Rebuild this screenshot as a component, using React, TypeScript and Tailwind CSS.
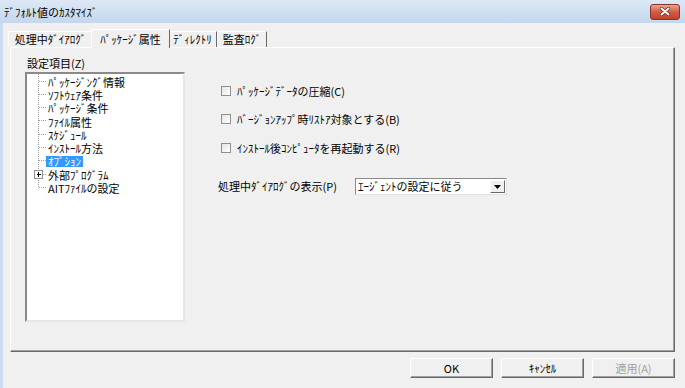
import React from "react";

const font = "font-['Noto_Sans_CJK_JP','Noto_Sans_CJK_SC',sans-serif]";

const treeItems = [
  "ﾊﾟｯｹｰｼﾞﾝｸﾞ情報",
  "ｿﾌﾄｳｪｱ条件",
  "ﾊﾟｯｹｰｼﾞ条件",
  "ﾌｧｲﾙ属性",
  "ｽｹｼﾞｭｰﾙ",
  "ｲﾝｽﾄｰﾙ方法",
  "ｵﾌﾟｼｮﾝ",
  "外部ﾌﾟﾛｸﾞﾗﾑ",
  "AITﾌｧｲﾙの設定",
];

const ROW = 13.3;

const TreeLines = () => {
  const last = (treeItems.length - 1) * ROW + 6.5;
  const boxY = Math.round(7 * ROW + 6.5);
  return (
    <svg
      className="pointer-events-none absolute left-0 top-0"
      width="24"
      height="130"
      shapeRendering="crispEdges"
    >
      <line x1="11.5" y1="0" x2="11.5" y2={last} stroke="#a0a0a0" strokeDasharray="1 1" />
      {treeItems.map((_, i) => {
        const y = Math.round(i * ROW + 6.5) + 0.5;
        return <line key={i} x1="12" y1={y} x2="20" y2={y} stroke="#a0a0a0" strokeDasharray="1 1" />;
      })}
      <rect x="7.5" y={boxY - 3.5} width="8" height="8" fill="white" stroke="#919191" />
      <line x1="9.5" y1={boxY + 0.5} x2="14" y2={boxY + 0.5} stroke="#000" />
      <line x1="11.5" y1={boxY - 2} x2="11.5" y2={boxY + 3} stroke="#000" />
    </svg>
  );
};

const Tree = () => (
  <div className="relative h-[250px] w-[160px] border-2 border-t-[#8a8a8a] border-l-[#8a8a8a] border-b-[#e6e6e6] border-r-[#e6e6e6] bg-white">
    <div className="relative pt-[1px]">
      <TreeLines />
      <div className="flex flex-col">
        {treeItems.map((t, i) => (
          <div key={t} className="flex h-[13.3px] items-center pl-[19px]">
            {i === 6 ? (
              <span className="bg-[#3399ff] px-[2px] text-[11px] leading-[11px] text-white">{t}</span>
            ) : (
              <span className="px-[2px] text-[11px] leading-[12px] text-black">{t}</span>
            )}
          </div>
        ))}
      </div>
    </div>
  </div>
);

const Check = ({ label }: { label: string }) => (
  <div className="flex h-[14px] items-center pl-[3px]">
    <span className="h-[10px] w-[10px] border border-[#8e8f8f] bg-gradient-to-br from-[#e4e4e4] to-white" />
    <span className="ml-[6px] text-[11px] leading-[14px] text-black">{label}</span>
  </div>
);

const Tab = ({ label, w, selected }: { label: string; w: string; selected?: boolean }) =>
  selected ? (
    <div
      className={`relative z-10 -mx-[2px] -mb-[1px] flex h-[19px] items-center justify-center border-l border-t border-r border-l-white border-t-white border-r-[#696969] bg-[#f0f0f0] text-[11px] text-black ${w}`}
    >
      {label}
    </div>
  ) : (
    <div
      className={`flex h-[16px] items-center justify-center border-l border-t border-r border-l-white border-t-white border-r-[#696969] bg-[#f0f0f0] text-[11px] text-black ${w}`}
    >
      {label}
    </div>
  );

const Button = ({ label, disabled }: { label: string; disabled?: boolean }) => (
  <div
    className={`flex h-[20px] w-[83px] items-center justify-center border border-t-white border-l-white border-b-[#696969] border-r-[#696969] bg-[#f0f0f0] text-[11px] shadow-[inset_-1px_-1px_0_#a0a0a0] ${
      disabled ? "text-[#a0a0a0]" : "text-black"
    }`}
  >
    {label}
  </div>
);

export default function App() {
  return (
    <div className={`flex h-[388px] w-[685px] flex-col overflow-hidden bg-[#f0f0f0] ${font}`}>
      {/* title bar */}
      <div className="flex h-[23px] items-center justify-between bg-gradient-to-b from-[#dde8f5] to-[#c4d7ee] pl-[4px] pr-[5px]">
        <span className="text-[11px] leading-[12px] text-black">ﾃﾞﾌｫﾙﾄ値のｶｽﾀﾏｲｽﾞ</span>
        <div className="flex h-[16px] w-[30px] items-center justify-center rounded-[3px] border border-[#8b3324] bg-gradient-to-b from-[#e9a493] via-[#d25c45] to-[#c1412a]">
          <svg width="10" height="9" viewBox="0 0 10 9">
            <path d="M1.5 1.5 L8.5 7.5 M8.5 1.5 L1.5 7.5" stroke="#6b2418" strokeWidth="3.4" strokeLinecap="round" />
            <path d="M1.5 1.5 L8.5 7.5 M8.5 1.5 L1.5 7.5" stroke="#fff" strokeWidth="2" strokeLinecap="round" />
          </svg>
        </div>
      </div>

      {/* body */}
      <div className="flex flex-1 flex-col border-l-[3px] border-l-[#c9dbf0] pl-[7px] pr-[10px] pt-[6px]">
        <div className="-ml-[2px] flex h-[18px] items-end">
          <Tab label="処理中ﾀﾞｲｱﾛｸﾞ" w="w-[85px]" />
          <Tab label="ﾊﾟｯｹｰｼﾞ属性" w="w-[79px]" selected />
          <Tab label="ﾃﾞｨﾚｸﾄﾘ" w="w-[49px]" />
          <Tab label="監査ﾛｸﾞ" w="w-[50px]" />
        </div>

        <div className="flex h-[305px] border border-t-white border-l-white border-b-[#696969] border-r-[#696969] bg-[#f0f0f0] shadow-[inset_-1px_-1px_0_#a0a0a0]">
          <div className="flex flex-col pl-[14px] pt-[9px]">
            <span className="ml-[2px] h-[13px] text-[11px] leading-[13px] text-black">設定項目(Z)</span>
            <div className="mt-[2px]">
              <Tree />
            </div>
          </div>

          <div className="ml-[33px] flex flex-col pt-[36px]">
            <Check label="ﾊﾟｯｹｰｼﾞﾃﾞｰﾀの圧縮(C)" />
            <div className="mt-[14px]">
              <Check label="ﾊﾞｰｼﾞｮﾝｱｯﾌﾟ時ﾘｽﾄｱ対象とする(B)" />
            </div>
            <div className="mt-[15px]">
              <Check label="ｲﾝｽﾄｰﾙ後ｺﾝﾋﾟｭｰﾀを再起動する(R)" />
            </div>
            <div className="mt-[23px] flex h-[17px] items-center">
              <span className="w-[137px] text-[11px] leading-[13px] text-black">処理中ﾀﾞｲｱﾛｸﾞの表示(P)</span>
              <div className="flex h-[17px] w-[152px] items-center justify-between border border-t-[#8a8a8a] border-l-[#8a8a8a] border-b-[#e3e3e3] border-r-[#e3e3e3] bg-white">
                <span className="pl-[2px] text-[11px] leading-[13px] text-black">ｴｰｼﾞｪﾝﾄの設定に従う</span>
                <div className="mr-[1px] flex h-[13px] w-[15px] items-center justify-center border border-t-white border-l-white border-b-[#696969] border-r-[#696969] bg-[#f0f0f0]">
                  <svg width="7" height="4" viewBox="0 0 7 4">
                    <path d="M0 0 H7 L3.5 4 Z" fill="#000" />
                  </svg>
                </div>
              </div>
            </div>
          </div>
        </div>

        <div className="mt-[6px] flex justify-end gap-[8px]">
          <Button label="OK" />
          <Button label="ｷｬﾝｾﾙ" />
          <Button label="適用(A)" disabled />
        </div>
      </div>
    </div>
  );
}
